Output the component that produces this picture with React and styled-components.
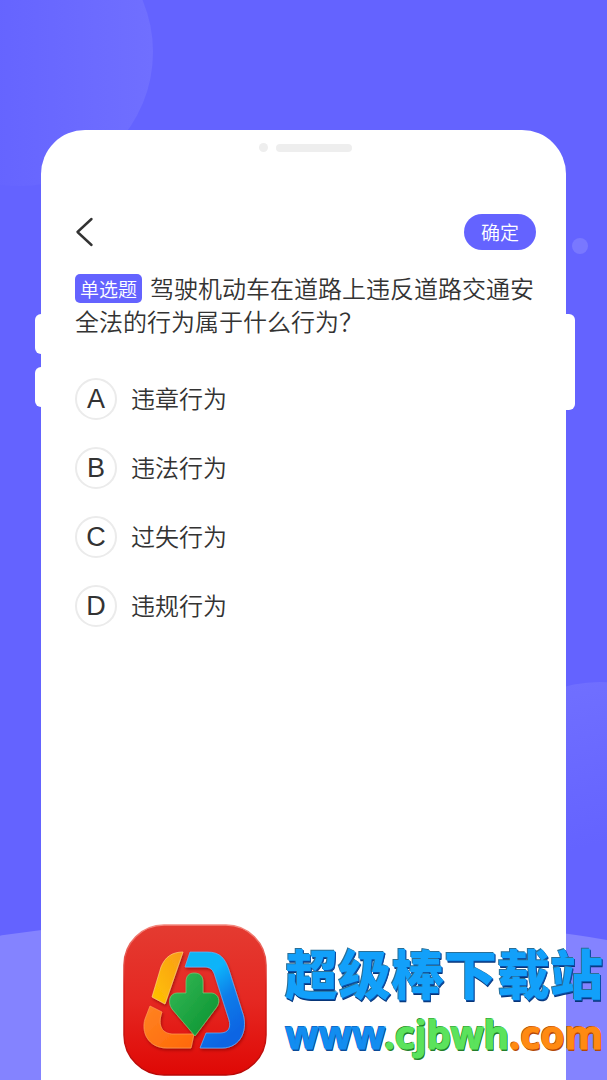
import React from "react";
import styled, { createGlobalStyle } from "styled-components";

const GlobalStyle = createGlobalStyle`
  * { box-sizing: border-box; }
  body {
    margin: 0;
    background: #6463ff;
    color: #333;
    font-family: "Noto Sans CJK SC", sans-serif;
    font-weight: 350;
  }
  button, input, fieldset { font: inherit; color: inherit; }
`;

const Page = styled.div`
  position: relative;
  display: flex;
  min-height: 100vh;
  padding: 130px 41px 0;
  overflow: hidden;
  background: #6463ff;
`;

const Bubble = styled.div`
  position: absolute;
  width: ${(p) => p.$size}px;
  height: ${(p) => p.$size}px;
  border-radius: 50%;
`;

const TopBubble = styled(Bubble)`
  top: -82px;
  left: -115px;
  background: linear-gradient(90deg, #6463ff 35%, #706fff 100%);
`;

const SideBubble = styled(Bubble)`
  top: 682px;
  right: -127px;
  background: linear-gradient(165deg, #7271ff 0%, #6463ff 58%);
`;

const Dot = styled(Bubble)`
  top: 238px;
  right: 19px;
  background: #7978ff;
`;

const Horizon = styled(Bubble)`
  top: 914px;
  left: calc(50% - 1964px);
  background: #8483ff;
`;

const Phone = styled.main`
  position: relative;
  flex: 1;
  min-width: 0;
  padding: 13px 30px 180px 34px;
  border-radius: 44px 44px 0 0;
  background: #fff;
`;

const SideKey = styled.span`
  position: absolute;
  top: ${(p) => p.$top}px;
  ${(p) => p.$side}: ${(p) => (p.$side === "left" ? -6 : -9)}px;
  width: 18px;
  height: ${(p) => p.$height}px;
  border-radius: 6px;
  background: #fff;
`;

const Speaker = styled.div`
  display: flex;
  align-items: center;
  justify-content: center;
  gap: 8px;
  height: 9px;
`;

const Lens = styled.span`
  width: 9px;
  height: 9px;
  border-radius: 50%;
  background: #eee;
`;

const Slot = styled.span`
  width: 76px;
  height: 8px;
  border-radius: 4px;
  background: #eee;
`;

const Header = styled.header`
  display: flex;
  align-items: center;
  justify-content: space-between;
  margin-top: 62px;
`;

const BackButton = styled.button`
  display: flex;
  padding: 0;
  border: 0;
  background: none;
`;

const ConfirmButton = styled.button`
  width: 72px;
  height: 36px;
  padding: 0;
  border: 0;
  border-radius: 18px;
  background: #6463ff;
  color: #fff;
  font-size: 19px;
  line-height: 34px;
`;

const Question = styled.h1`
  margin: 21px 0 0;
  font-size: 24px;
  font-weight: inherit;
  line-height: 33px;
`;

const Tag = styled.span`
  display: inline-block;
  margin: 3px 8px 0 0;
  padding: 0 5px;
  border-radius: 5px;
  background: #6463ff;
  color: #fff;
  font-size: 19px;
  line-height: 29px;
  vertical-align: top;
`;

const Options = styled.fieldset`
  display: flex;
  flex-direction: column;
  align-items: flex-start;
  gap: 27px;
  margin: 41px 0 0;
  padding: 0;
  border: 0;
`;

const Option = styled.label`
  display: flex;
  align-items: flex-start;
  gap: 14px;
  font-size: 24px;
  line-height: 40px;
`;

const Choice = styled.span`
  display: grid;
  width: 42px;
  height: 42px;
  place-items: center;
`;

const Radio = styled.input`
  grid-area: 1 / 1;
  width: 42px;
  height: 42px;
  margin: 0;
  appearance: none;
  border: 2px solid #ebebeb;
  border-radius: 50%;
  &:checked { border-color: #6463ff; }
`;

const Letter = styled.span`
  grid-area: 1 / 1;
  font-family: "Liberation Sans", sans-serif;
  font-size: 27px;
  line-height: 42px;
  pointer-events: none;
`;

const SiteMark = styled.footer`
  position: absolute;
  right: 4px;
  bottom: 4px;
  display: flex;
  align-items: center;
  gap: 18px;
`;

const SiteText = styled.div`
  display: flex;
  flex-direction: column;
  align-items: center;
  gap: 6px;
  padding-top: 2px;
  white-space: nowrap;
`;

const SiteName = styled.strong`
  color: #12a0fa;
  font-size: 53px;
  font-weight: 900;
  line-height: 60px;
  text-shadow: -1px -1px 0 #2b6f96, 1px 1px 0 #0a4fa8, 1px 2px 0 #073577;
`;

const SiteLink = styled.a`
  font-family: "Noto Sans", sans-serif;
  font-size: 39px;
  font-weight: 700;
  line-height: 52px;
  text-decoration: none;
`;

const LinkPart = styled.span`
  color: ${(p) => p.$color};
  text-shadow: -1px -1px 0 ${(p) => p.$edge}, 1px 1px 0 ${(p) => p.$edge}, 1px 2px 0 ${(p) => p.$edge};
  -webkit-text-stroke: 1px ${(p) => p.$color};
`;

const options = [
  ["A", "违章行为"],
  ["B", "违法行为"],
  ["C", "过失行为"],
  ["D", "违规行为"],
];

function SiteLogo() {
  return (
    <svg width="144" height="152" viewBox="0 0 144 152" aria-hidden="true">
      <defs>
        <linearGradient id="red" x1="0" y1="0" x2="0" y2="1">
          <stop offset="0" stopColor="#e43b31" />
          <stop offset="0.5" stopColor="#e52822" />
          <stop offset="1" stopColor="#df0805" />
        </linearGradient>
        <linearGradient id="rim" x1="0" y1="0" x2="0" y2="1">
          <stop offset="0" stopColor="#f4897f" />
          <stop offset="0.4" stopColor="#d8211c" />
          <stop offset="1" stopColor="#b80705" />
        </linearGradient>
        <linearGradient id="blue" x1="0" y1="0" x2="0.5" y2="1">
          <stop offset="0" stopColor="#12b5f2" />
          <stop offset="0.35" stopColor="#08b4fa" />
          <stop offset="0.65" stopColor="#087de9" />
          <stop offset="1" stopColor="#0865e3" />
        </linearGradient>
        <linearGradient id="yellow" x1="1" y1="0" x2="0" y2="1">
          <stop offset="0" stopColor="#f99c18" />
          <stop offset="1" stopColor="#ffc400" />
        </linearGradient>
        <linearGradient id="orange" x1="0" y1="0" x2="1" y2="1">
          <stop offset="0" stopColor="#ff8424" />
          <stop offset="1" stopColor="#ff6806" />
        </linearGradient>
        <linearGradient id="green" x1="0" y1="0" x2="1" y2="1">
          <stop offset="0" stopColor="#37b957" />
          <stop offset="1" stopColor="#07912e" />
        </linearGradient>
        <filter id="drop" x="-20%" y="-20%" width="140%" height="140%">
          <feDropShadow dx="1" dy="2" stdDeviation="1.5" floodColor="#7d0000" floodOpacity="0.6" />
        </filter>
      </defs>
      <rect x="1" y="1" width="142" height="150" rx="40" fill="url(#red)" stroke="url(#rim)" strokeWidth="1.5" />
      <g filter="url(#drop)" strokeWidth="0.7">
        <path d="M60 28 C49 28 42 33 38 43 L29 73 L42 80 Z" fill="url(#yellow)" stroke="#ffd07b" />
        <path d="M27 82 L39 88 C35 99 37 109 49 110 H71 L68 124 H44 C25 124 18 108 22 95 Z" fill="url(#orange)" stroke="#ff9d57" />
        <path d="M67 28 H84 C98 28 102 35 106 46 L119 87 C126 105 118 124 99 124 H77 L83 109 H97 C106 109 108 103 106 96 L92 52 C90 45 87 43 81 43 H62 Z" fill="url(#blue)" stroke="#68b4fa" />
        <path d="M63 58 C63 52 66 49 71 49 C77 49 80 52 80 58 V69 H89 C96 70 98 78 93 84 L72 112 L49 85 C44 78 47 69 54 69 H63 Z" fill="url(#green)" stroke="#75cf77" />
      </g>
    </svg>
  );
}

export default function App() {
  return (
    <>
      <GlobalStyle />
      <Page>
        <TopBubble $size={268} />
        <SideBubble $size={268} />
        <Dot $size={16} />
        <Horizon $size={3900} />
        <Phone>
          <SideKey $side="left" $top={184} $height={40} />
          <SideKey $side="left" $top={237} $height={40} />
          <SideKey $side="right" $top={184} $height={96} />
          <Speaker>
            <Lens />
            <Slot />
          </Speaker>
          <Header>
            <BackButton type="button" aria-label="返回">
              <svg width="20" height="30" viewBox="0 0 20 30" fill="none" stroke="#333" strokeWidth="2.4" strokeLinecap="round" strokeLinejoin="round">
                <path d="M16.5 2 L2.5 15 L16.5 28" />
              </svg>
            </BackButton>
            <ConfirmButton type="button">确定</ConfirmButton>
          </Header>
          <Question>
            <Tag>单选题</Tag>
            驾驶机动车在道路上违反道路交通安全法的行为属于什么行为？
          </Question>
          <Options aria-label="选项">
            {options.map(([letter, text]) => (
              <Option key={letter}>
                <Choice>
                  <Radio type="radio" name="answer" value={letter} />
                  <Letter>{letter}</Letter>
                </Choice>
                {text}
              </Option>
            ))}
          </Options>
        </Phone>
        <SiteMark>
          <SiteLogo />
          <SiteText>
            <SiteName>超级棒下载站</SiteName>
            <SiteLink href="#home">
              <LinkPart $color="#128df0" $edge="#0b4c99">www</LinkPart>
              <LinkPart $color="#5be35c" $edge="#237f2b">.cjbwh</LinkPart>
              <LinkPart $color="#ff8a12" $edge="#b34a08">.com</LinkPart>
            </SiteLink>
          </SiteText>
        </SiteMark>
      </Page>
    </>
  );
}
